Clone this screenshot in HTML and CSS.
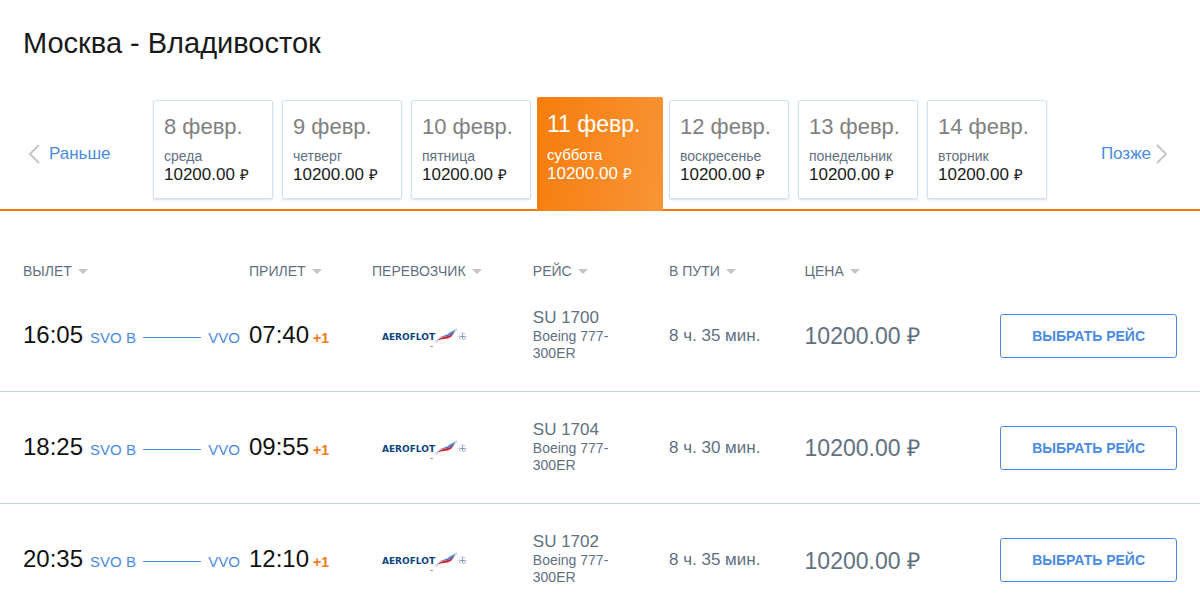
FILE: index.html
```html
<!DOCTYPE html>
<html lang="ru">
<head>
<meta charset="utf-8">
<meta name="viewport" content="width=device-width, initial-scale=1">
<title>Москва - Владивосток</title>
<link rel="stylesheet" href="styles.css">
</head>
<body>
<svg class="sprite" aria-hidden="true">
  <symbol id="aeroflot-mark" viewBox="0 0 32 20">
    <path d="M0 16 L5 9.500 C9 8 13 7.500 16 4.500 L22.500 2 L20 6 L16 10 L8 12.500Z" fill="#e3e8ee"/>
    <path d="M6 10 C9 8 12 8.500 15 5.500 L20 3.500 L18.500 7 L12 9.500Z" fill="#4a7fcb"/>
    <path d="M2 13.500 C7 9 13 10.500 18 6.500 C17 10.500 14 11.500 9 12 C6 12.300 4 12.500 2 13.500Z" fill="#d9232e"/>
    <path d="M0 15.500 C3 13 3 12 7 9.500 M16 5 L22 2" fill="none" stroke="#9aa3ad" stroke-width=".8"/>
    <circle cx="27.500" cy="9.500" r="3.500" fill="none" stroke="#aab6cd" stroke-width="1" stroke-dasharray="5 2"/>
    <path d="M25 9.500h5M27.500 7v5" fill="none" stroke="#8797b8" stroke-width="1"/>
    <path d="M-5 19.500h3" fill="none" stroke="#9aa3ad" stroke-width="1"/>
  </symbol>
</svg>

<header class="page-header">
  <h1 class="title">Москва - Владивосток</h1>
</header>

<nav class="dates" aria-label="Даты вылета">
  <a class="shift shift-prev" href="#">
    <svg class="chevron" viewBox="0 0 12 20" aria-hidden="true"><path d="M11 1 2 10l9 9"/></svg>
    Раньше
  </a>
  <div class="days">
    <a class="day" href="#"><span class="day-date">8 февр.</span><span class="day-name">среда</span><span class="day-price">10200.00 <span class="ruble">₽</span></span></a>
    <a class="day" href="#"><span class="day-date">9 февр.</span><span class="day-name">четверг</span><span class="day-price">10200.00 <span class="ruble">₽</span></span></a>
    <a class="day" href="#"><span class="day-date">10 февр.</span><span class="day-name">пятница</span><span class="day-price">10200.00 <span class="ruble">₽</span></span></a>
    <a class="day day-active" href="#" aria-current="date"><span class="day-date">11 февр.</span><span class="day-name">суббота</span><span class="day-price">10200.00 <span class="ruble">₽</span></span></a>
    <a class="day" href="#"><span class="day-date">12 февр.</span><span class="day-name">воскресенье</span><span class="day-price">10200.00 <span class="ruble">₽</span></span></a>
    <a class="day" href="#"><span class="day-date">13 февр.</span><span class="day-name">понедельник</span><span class="day-price">10200.00 <span class="ruble">₽</span></span></a>
    <a class="day" href="#"><span class="day-date">14 февр.</span><span class="day-name">вторник</span><span class="day-price">10200.00 <span class="ruble">₽</span></span></a>
  </div>
  <a class="shift shift-next" href="#">
    Позже
    <svg class="chevron" viewBox="0 0 12 20" aria-hidden="true"><path d="m1 1 9 9-9 9"/></svg>
  </a>
</nav>

<main>
<table class="flights">
  <colgroup>
    <col class="col-departure"><col class="col-arrival"><col class="col-carrier"><col class="col-flight"><col class="col-duration"><col class="col-price"><col>
  </colgroup>
  <thead>
    <tr>
      <th scope="col"><button class="sort" type="button">ВЫЛЕТ</button></th>
      <th scope="col"><button class="sort" type="button">ПРИЛЕТ</button></th>
      <th scope="col"><button class="sort" type="button">ПЕРЕВОЗЧИК</button></th>
      <th scope="col"><button class="sort" type="button">РЕЙС</button></th>
      <th scope="col"><button class="sort" type="button">В ПУТИ</button></th>
      <th scope="col"><button class="sort" type="button">ЦЕНА</button></th>
      <td></td>
    </tr>
  </thead>
  <tbody>
    <tr>
      <td><div class="leg"><span class="time">16:05</span><a class="airport" href="#">SVO B</a><span class="track"></span><a class="airport" href="#">VVO</a></div></td>
      <td><div class="leg leg-end"><span class="time">07:40</span><span class="plus">+1</span></div></td>
      <td><div class="carrier"><span class="carrier-name">AEROFLOT</span><svg class="carrier-mark" aria-hidden="true"><use href="#aeroflot-mark"/></svg></div></td>
      <td><div class="number">SU 1700</div><div class="plane">Boeing 777-300ER</div></td>
      <td class="duration">8 ч. 35 мин.</td>
      <td class="price">10200.00 ₽</td>
      <td class="action"><button class="select" type="button">ВЫБРАТЬ РЕЙС</button></td>
    </tr>
    <tr>
      <td><div class="leg"><span class="time">18:25</span><a class="airport" href="#">SVO B</a><span class="track"></span><a class="airport" href="#">VVO</a></div></td>
      <td><div class="leg leg-end"><span class="time">09:55</span><span class="plus">+1</span></div></td>
      <td><div class="carrier"><span class="carrier-name">AEROFLOT</span><svg class="carrier-mark" aria-hidden="true"><use href="#aeroflot-mark"/></svg></div></td>
      <td><div class="number">SU 1704</div><div class="plane">Boeing 777-300ER</div></td>
      <td class="duration">8 ч. 30 мин.</td>
      <td class="price">10200.00 ₽</td>
      <td class="action"><button class="select" type="button">ВЫБРАТЬ РЕЙС</button></td>
    </tr>
    <tr>
      <td><div class="leg"><span class="time">20:35</span><a class="airport" href="#">SVO B</a><span class="track"></span><a class="airport" href="#">VVO</a></div></td>
      <td><div class="leg leg-end"><span class="time">12:10</span><span class="plus">+1</span></div></td>
      <td><div class="carrier"><span class="carrier-name">AEROFLOT</span><svg class="carrier-mark" aria-hidden="true"><use href="#aeroflot-mark"/></svg></div></td>
      <td><div class="number">SU 1702</div><div class="plane">Boeing 777-300ER</div></td>
      <td class="duration">8 ч. 35 мин.</td>
      <td class="price">10200.00 ₽</td>
      <td class="action"><button class="select" type="button">ВЫБРАТЬ РЕЙС</button></td>
    </tr>
  </tbody>
</table>
</main>
</body>
</html>
```
FILE: styles.css
```css
* {
  box-sizing: border-box;
}

body {
  margin: 0;
  background: #fff;
  color: #1a1a1a;
  font-family: "Liberation Sans", Arial, sans-serif;
}

a {
  text-decoration: none;
}

button {
  font-family: inherit;
  cursor: pointer;
}

.sprite {
  display: none;
}

.page-header {
  padding: 25px 23px 39px;
}

.title {
  margin: 0;
  font-size: 29px;
  font-weight: 400;
  line-height: 36px;
}

/* Date strip */
.dates {
  display: grid;
  grid-template-columns: 125px 1fr 125px;
  column-gap: 28px;
  padding-bottom: 10px;
  border-bottom: 2px solid #f07a10;
}

.shift {
  display: flex;
  align-items: center;
  gap: 9px;
  padding-top: 8px;
  color: #4a8be0;
  font-size: 17px;
}

.shift-prev {
  padding-left: 28px;
}

.shift-next {
  justify-content: flex-end;
  gap: 5px;
  padding-right: 32px;
}

.chevron {
  width: 12px;
  height: 20px;
  fill: none;
  stroke: #c6c6c6;
  stroke-width: 2;
}

.days {
  display: grid;
  grid-template-columns: repeat(7, 1fr);
  gap: 9px;
}

.day {
  display: flex;
  flex-direction: column;
  padding: 12px 10px 14px;
  border: 1px solid #d3e0f0;
  border-radius: 2px;
  box-shadow: 0 1px 2px #d3e0f0;
  color: #1a1a1a;
  white-space: nowrap;
}

.day-date {
  color: #808080;
  font-size: 22px;
  line-height: 28px;
}

.day-name {
  margin-top: 6px;
  color: #5f7080;
  font-size: 14px;
  line-height: 18px;
}

.day-price {
  font-size: 17px;
  line-height: 19px;
}

.ruble {
  font-size: 15px;
}

.day-active {
  z-index: 1;
  margin: -3px -3px -12px;
  padding: 13px 10px;
  border: 0;
  border-radius: 2px 2px 0 0;
  box-shadow: none;
  background: linear-gradient(100deg, #f57d0b, #f99437);
  color: #fff;
}

.day-active .day-date {
  color: #fff;
  font-size: 23px;
}

.day-active .day-name {
  margin-top: 8px;
  color: #fff;
  font-size: 15px;
}

/* Flights */
.flights {
  width: 100%;
  border-collapse: collapse;
  table-layout: fixed;
  color: #5f7080;
}

.col-departure { width: 20.75%; }
.col-arrival { width: 10.25%; }
.col-carrier { width: 13.4%; }
.col-flight { width: 11.35%; }
.col-duration { width: 11.3%; }
.col-price { width: 13%; }

.flights th {
  padding: 51px 0 0;
  text-align: left;
}

.flights th:first-child,
.flights td:first-child {
  padding-left: 23px;
}

.sort {
  display: flex;
  align-items: center;
  gap: 6px;
  padding: 0;
  border: 0;
  background: none;
  color: #5f7080;
  font-size: 14px;
  line-height: 18px;
}

.sort::after {
  content: "";
  border: 5px solid transparent;
  border-top-color: #c4c4c4;
  border-bottom: 0;
}

.flights tbody td {
  padding: 28px 0;
  vertical-align: middle;
}

.flights tbody tr {
  border-bottom: 1px solid #c3cfdc;
}

.flights tbody tr:last-child {
  border-bottom: 0;
}

.flights tbody tr:last-child td {
  padding-bottom: 20px;
}

.leg {
  display: flex;
  align-items: baseline;
  gap: 7px;
  padding: 0 9px 2px 0;
  white-space: nowrap;
}

.leg-end {
  gap: 4px;
}

.time {
  color: #111;
  font-size: 24px;
  line-height: 28px;
}

.airport {
  color: #4a8be0;
  font-size: 15px;
}

.track {
  flex: 1;
  align-self: center;
  height: 1px;
  margin-top: 6px;
  background: #4a8be0;
}

.plus {
  color: #f07a10;
  font-size: 14px;
  font-weight: 700;
}

.carrier {
  display: flex;
  align-items: center;
  padding: 2px 0 0 10px;
}

.carrier-name {
  color: #0d4384;
  font-family: "DejaVu Sans", sans-serif;
  font-size: 9px;
  font-weight: 700;
}

.carrier-mark {
  width: 32px;
  height: 20px;
  overflow: visible;
}

.carrier-mark,
.sprite symbol {
  overflow: visible;
}

.number {
  font-size: 17px;
  line-height: 20px;
}

.plane {
  max-width: 100px;
  padding-bottom: 1px;
  font-size: 14px;
  line-height: 17px;
}

.duration {
  font-size: 17px;
}

.flights .price {
  padding-bottom: 30px;
  font-size: 23px;
}

.flights .action {
  padding-right: 23px;
  text-align: right;
}

.select {
  padding: 11px 31px;
  border: 1px solid #4a8be0;
  border-radius: 3px;
  background: #fff;
  color: #4a8be0;
  font-size: 14px;
  font-weight: 700;
  line-height: 20px;
  white-space: nowrap;
}
```
